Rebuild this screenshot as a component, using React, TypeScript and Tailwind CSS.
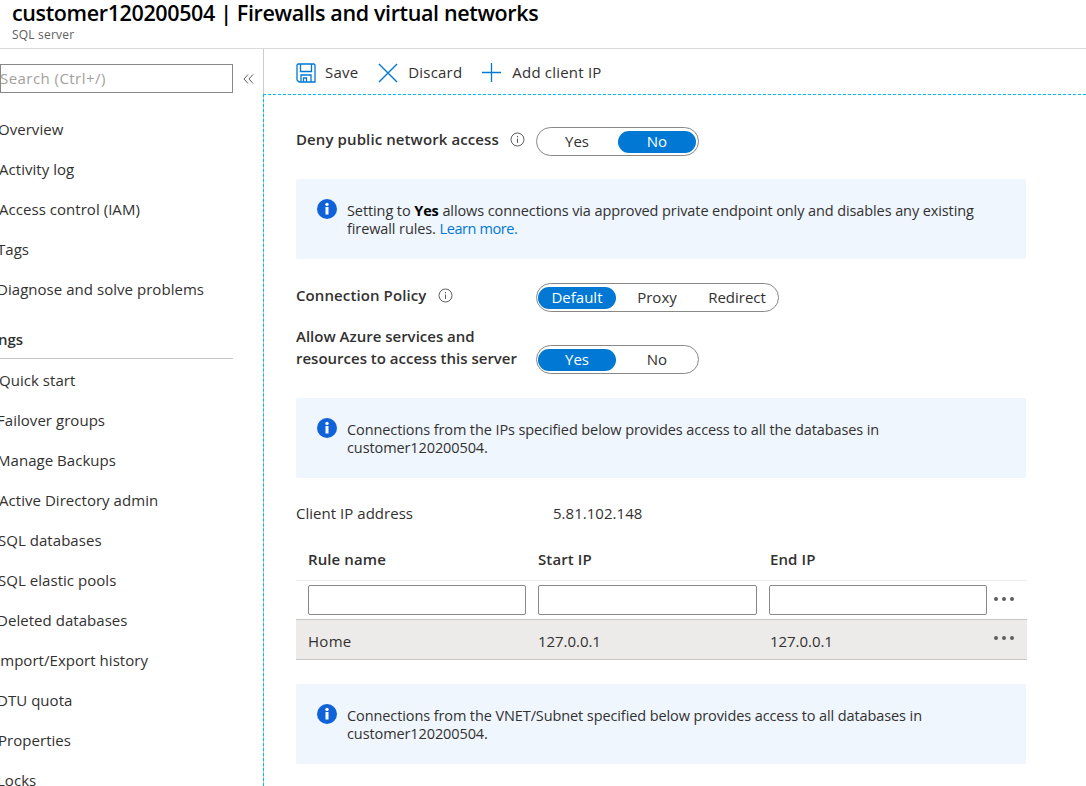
import React from "react";

const font = "[font-family:'Open_Sans','Noto_Sans',sans-serif]";

function InfoOutline() {
  return (
    <svg width="15" height="15" viewBox="0 0 15 15" fill="none" className="shrink-0">
      <circle cx="7.5" cy="7.5" r="6.5" stroke="#605e5c" strokeWidth="1" />
      <rect x="7" y="6.5" width="1" height="4.5" fill="#605e5c" />
      <rect x="7" y="4" width="1" height="1.3" fill="#605e5c" />
    </svg>
  );
}

function InfoFilled() {
  return (
    <svg width="20" height="20" viewBox="0 0 20 20" className="shrink-0">
      <circle cx="10" cy="10" r="10" fill="#0f62d8" />
      <rect x="8.5" y="8" width="3" height="7.5" fill="#fff" />
      <circle cx="10" cy="5.4" r="1.7" fill="#fff" />
    </svg>
  );
}

function Toggle({ options, active }: { options: string[]; active: number }) {
  return (
    <div className="flex h-[29px] items-center rounded-full border border-[#8a8886] bg-white pl-[1px]">
      {options.map((o, i) => (
        <div
          key={o}
          className={`mr-[2px] flex h-[22px] w-[78px] items-center justify-center rounded-full text-[15px] ${
            i === active ? "bg-[#0078d4] text-white" : "text-[#323130]"
          }`}
        >
          {o}
        </div>
      ))}
    </div>
  );
}

function InfoBox({ children }: { children: React.ReactNode }) {
  return (
    <div className="flex h-[80px] w-[730px] gap-[10px] rounded-[2px] bg-[#eff6fe] pl-[21px] pr-[40px] pt-[20px] text-[14.5px] leading-[18px] tracking-[-0.1px] text-[#323130]">
      <InfoFilled />
      <div className="pt-[3px]">{children}</div>
    </div>
  );
}

function Dots({ className = "" }: { className?: string }) {
  return (
    <div className={`flex gap-[4px] ${className}`}>
      <span className="h-[4px] w-[4px] rounded-full bg-[#605e5c]" />
      <span className="h-[4px] w-[4px] rounded-full bg-[#605e5c]" />
      <span className="h-[4px] w-[4px] rounded-full bg-[#605e5c]" />
    </div>
  );
}

const groupOne = ["Overview", "Activity log", "Access control (IAM)", "Tags", "Diagnose and solve problems"];
const groupTwo = [
  "Quick start",
  "Failover groups",
  "Manage Backups",
  "Active Directory admin",
  "SQL databases",
  "SQL elastic pools",
  "Deleted databases",
  "Import/Export history",
  "DTU quota",
  "Properties",
  "Locks",
];

function NavItem({ label, left }: { label: string; left: string }) {
  return (
    <div className={`flex h-[40px] items-center whitespace-nowrap text-[15px] tracking-[0.04px] text-[#323130] ${left}`}>
      {label}
    </div>
  );
}

const navOffset: Record<string, string> = {
  Overview: "-ml-[2px]",
  "Activity log": "-ml-[1px]",
  "Access control (IAM)": "-ml-[1px]",
  Tags: "-ml-[3px]",
  "Diagnose and solve problems": "-ml-[3px]",
  "Quick start": "-ml-[1px]",
  "Failover groups": "-ml-[3px]",
  "Manage Backups": "-ml-[3px]",
  "Active Directory admin": "-ml-[1px]",
  "SQL databases": "-ml-[2px]",
  "SQL elastic pools": "-ml-[2px]",
  "Deleted databases": "-ml-[3px]",
  "Import/Export history": "-ml-[4px]",
  "DTU quota": "-ml-[3px]",
  Properties: "-ml-[2px]",
  Locks: "-ml-[3px]",
};

export default function App() {
  return (
    <div className={`flex h-[786px] w-[1086px] flex-col overflow-hidden bg-white ${font}`}>
      <header className="h-[49px] shrink-0 border-b border-[#d9d9d9] pl-[12px]">
        <h1 className="-mt-[1px] h-[27px] whitespace-nowrap text-[21.5px] font-semibold leading-[27px] tracking-[-0.37px] text-black">
          customer120200504 | Firewalls and virtual networks
        </h1>
        <div className="mt-[2px] text-[12px] leading-[14px] tracking-[0.2px] text-[#605e5c]">SQL server</div>
      </header>

      <div className="flex min-h-0 flex-1">
        <aside className="w-[264px] shrink-0 overflow-hidden border-r border-[#cccccc]">
          <div className="flex items-center pt-[15px]">
            <div className="flex h-[29px] w-[233px] items-center overflow-hidden border border-[#8a8886] text-[15px] tracking-[0.45px] text-[#a19f9d]">
              <span className="-ml-[1px] whitespace-nowrap">Search (Ctrl+/)</span>
            </div>
            <svg width="11" height="10" viewBox="0 0 11 10" fill="none" className="ml-[10px]" stroke="#605e5c" strokeWidth="1">
              <path d="M5 .5 1 5l4 4.5M10 .5 6 5l4 4.5" />
            </svg>
          </div>
          <nav className="mt-[16px] w-[233px]">
            {groupOne.map((l) => (
              <NavItem key={l} label={l} left={navOffset[l]} />
            ))}
            <div className="mt-[11px] flex h-[39px] items-center border-b border-[#c8c6c4] text-[15px] font-semibold text-[#323130]">
              <span className="-ml-[35px]">Settings</span>
            </div>
            <div className="mt-[1px]">
              {groupTwo.map((l) => (
                <NavItem key={l} label={l} left={navOffset[l]} />
              ))}
            </div>
          </nav>
        </aside>

        <main className="min-w-0 flex-1">
          <div className="flex h-[45px] items-center pl-[32px] pt-[2px] text-[15px] tracking-[0.2px] text-[#323130]">
            <svg width="20" height="20" viewBox="0 0 20 20" fill="none" stroke="#0078d4" strokeWidth="1.3">
              <path d="M2 1h16l1 1v17H3l-2-2V2z" />
              <path d="M4.5 1v7.5h11V1M5 19v-7h10v7M7.5 19v-4h3v4" />
            </svg>
            <span className="ml-[9px]">Save</span>
            <svg width="20" height="20" viewBox="0 0 20 20" fill="none" stroke="#0078d4" strokeWidth="1.4" className="ml-[20px]">
              <path d="M1 1l18 18M19 1 1 19" />
            </svg>
            <span className="ml-[10px]">Discard</span>
            <svg width="19" height="19" viewBox="0 0 19 19" fill="none" stroke="#0078d4" strokeWidth="1.3" className="ml-[20px]">
              <path d="M9.5 0v19M0 9.5h19" />
            </svg>
            <span className="ml-[11px]">Add client IP</span>
          </div>

          <div className="-ml-[1px] h-full border-l border-t border-dashed border-[#00bcf2] pl-[32px] pt-[32px]">
            <div className="flex items-center">
              <div className="-mt-[4px] flex w-[240px] items-center gap-[11px] text-[15px] font-semibold tracking-[0.1px] text-[#323130]">
                <span className="whitespace-nowrap">Deny public network access</span>
                <InfoOutline />
              </div>
              <Toggle options={["Yes", "No"]} active={1} />
            </div>

            <div className="mt-[23px]">
              <InfoBox>
                Setting to <b className="font-bold text-black">Yes</b> allows connections via approved private endpoint only and disables any existing firewall rules.{" "}
                <span className="tracking-[-0.4px] text-[#0078d4]">Learn more.</span>
              </InfoBox>
            </div>

            <div className="mt-[24px] flex items-center">
              <div className="-mt-[4px] flex w-[240px] items-center gap-[12px] text-[15px] font-semibold tracking-[0.1px] text-[#323130]">
                <span>Connection Policy</span>
                <InfoOutline />
              </div>
              <Toggle options={["Default", "Proxy", "Redirect"]} active={0} />
            </div>

            <div className="mt-[13px] flex items-start">
              <div className="w-[240px] whitespace-nowrap text-[15px] font-semibold leading-[22px] text-[#323130]">
                <div>Allow Azure services and</div>
                <div>resources to access this server</div>
              </div>
              <div className="mt-[20px]">
                <Toggle options={["Yes", "No"]} active={0} />
              </div>
            </div>

            <div className="mt-[24px]">
              <InfoBox>Connections from the IPs specified below provides access to all the databases in customer120200504.</InfoBox>
            </div>

            <div className="mt-[25px] flex h-[20px] items-center text-[15px] tracking-[0.03px] text-[#323130]">
              <span className="w-[257px]">Client IP address</span>
              <span>5.81.102.148</span>
            </div>

            <div className="mt-[25px] w-[731px]">
              <div className="grid h-[33px] grid-cols-[230px_232px_1fr] items-center border-b border-[#edebe9] pb-[9px] pl-[12px] text-[15px] font-semibold tracking-[0.1px] text-[#323130]">
                <span>Rule name</span>
                <span>Start IP</span>
                <span>End IP</span>
              </div>
              <div className="flex h-[39px] items-start gap-[12px] border-b border-[#c8c6c4] pl-[12px] pt-[4px]">
                <div className="h-[30px] w-[218px] rounded-[2px] border border-[#8a8886] bg-white" />
                <div className="h-[30px] w-[219px] rounded-[2px] border border-[#8a8886] bg-white" />
                <div className="h-[30px] w-[218px] rounded-[2px] border border-[#8a8886] bg-white" />
                <Dots className="-ml-[5px] mt-[12px]" />
              </div>
              <div className="grid h-[40px] grid-cols-[230px_232px_185px_1fr] items-center border-b border-[#c8c6c4] bg-[#edebe9] pl-[12px] pt-[4px] text-[15px] tracking-[-0.05px] text-[#323130]">
                <span className="tracking-[0.3px]">Home</span>
                <span>127.0.0.1</span>
                <span>127.0.0.1</span>
                <Dots className="-mt-[7px] ml-[39px]" />
              </div>
            </div>

            <div className="mt-[24px]">
              <InfoBox>Connections from the VNET/Subnet specified below provides access to all databases in customer120200504.</InfoBox>
            </div>
          </div>
        </main>
      </div>
    </div>
  );
}
